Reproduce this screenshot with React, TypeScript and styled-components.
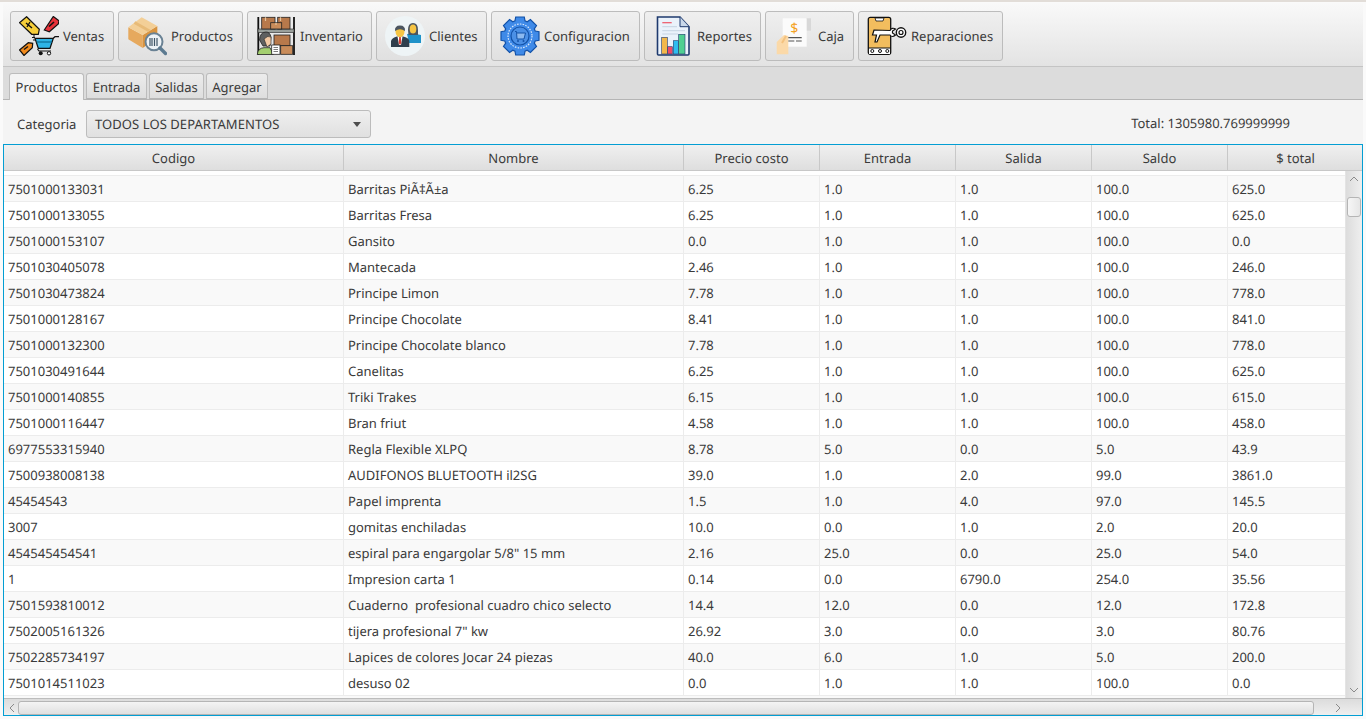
import { createGlobalStyle, styled } from 'styled-components';

const GlobalStyle = createGlobalStyle`
  html, body {
    margin: 0;
    padding: 0;
    height: 719px;
    overflow: hidden;
    background: #f4f4f4;
    font-family: "Noto Sans", "Open Sans", sans-serif;
    font-size: 13px;
    color: #3a3a3a;
    text-rendering: geometricPrecision;
  }
`;

const Page = styled.div`
  width: 1366px;
  height: 719px;
  display: flex;
  flex-direction: column;
  background: #f4f4f4;
  overflow: hidden;
`;

const TitleEdge = styled.div`
  height: 2px;
  background: #e2ddd8;
  flex: none;
`;

const Inner = styled.div`
  flex: 1;
  min-height: 0;
  display: flex;
  flex-direction: column;
  padding: 1px 3px 3px 3px;
  background: #fafafa;
`;

const Toolbar = styled.div`
  flex: none;
  height: 64px;
  box-sizing: border-box;
  display: flex;
  align-items: flex-start;
  gap: 4px;
  padding: 8px 7px 0;
  background: linear-gradient(#f9f9f9, #e3e3e3);
  border-bottom: 1px solid #c4c4c4;
`;

const ToolButton = styled.div<{ $w: number }>`
  width: ${(p) => p.$w}px;
  height: 50px;
  box-sizing: border-box;
  display: flex;
  align-items: center;
  gap: 4px;
  padding-left: 8px;
  border: 1px solid #bcbcbc;
  border-radius: 3px;
  background: linear-gradient(#efefef, #e0e0e0);
  white-space: nowrap;
  svg {
    flex: none;
  }
`;

const TabHeader = styled.div`
  flex: none;
  height: 33px;
  box-sizing: border-box;
  display: flex;
  align-items: flex-end;
  gap: 2px;
  padding-left: 6px;
  background: #dcdcdc;
  border-bottom: 1px solid #b5b5b5;
`;

const Tab = styled.div<{ $active?: boolean; $w: number }>`
  width: ${(p) => p.$w}px;
  height: ${(p) => (p.$active ? 27 : 26)}px;
  margin-bottom: ${(p) => (p.$active ? -1 : 0)}px;
  padding-top: ${(p) => (p.$active ? 0 : 1)}px;
  box-sizing: border-box;
  display: flex;
  align-items: center;
  justify-content: center;
  border: 1px solid #bcbcbc;
  border-bottom: ${(p) => (p.$active ? 'none' : '1px solid #b5b5b5')};
  border-radius: 3px 3px 0 0;
  background: ${(p) => (p.$active ? '#f4f4f4' : 'linear-gradient(#ececec, #dedede)')};
  position: relative;
`;

const Filter = styled.div`
  flex: none;
  height: 44px;
  box-sizing: border-box;
  display: flex;
  align-items: center;
  padding: 4px 73px 0 14px;
  background: #f4f4f4;
`;

const FilterLabel = styled.span`
  width: 69px;
`;

const Combo = styled.div`
  width: 285px;
  height: 28px;
  box-sizing: border-box;
  display: flex;
  align-items: center;
  justify-content: space-between;
  padding: 0 9px 0 8px;
  border: 1px solid #bcbcbc;
  border-radius: 3px;
  background: linear-gradient(#efefef, #e0e0e0);
  letter-spacing: 0.08px;
`;

const Arrow = styled.span`
  width: 0;
  height: 0;
  border-left: 4.5px solid transparent;
  border-right: 4.5px solid transparent;
  border-top: 5px solid #4d4d4d;
`;

const Total = styled.span`
  margin-left: auto;
  margin-top: -2px;
`;

const Table = styled.div`
  flex: 1;
  min-height: 0;
  display: flex;
  flex-direction: column;
  border: 1px solid #039ed3;
  background: #fff;
  overflow: hidden;
`;

const columns = '340px 340px 136px 136px 136px 136px 136px';

const HeaderRow = styled.div`
  flex: none;
  height: 26px;
  box-sizing: border-box;
  display: grid;
  grid-template-columns: ${columns};
  background: linear-gradient(#f0f0f0, #dedede);
  border-bottom: 1px solid #c8c8c8;
`;

const HeaderCell = styled.div`
  display: flex;
  align-items: center;
  justify-content: center;
  border-right: 1px solid #c8c8c8;
`;

const Middle = styled.div`
  flex: 1;
  min-height: 0;
  display: flex;
`;

const Viewport = styled.div`
  flex: 1;
  min-width: 0;
  overflow: hidden;
`;

const Row = styled.div<{ $odd: boolean; $h?: number }>`
  height: ${(p) => p.$h ?? 26}px;
  box-sizing: border-box;
  display: grid;
  grid-template-columns: ${columns};
  background: ${(p) => (p.$odd ? '#f9f9f9' : '#fff')};
  border-bottom: 1px solid #ececec;
`;

const Cell = styled.div`
  display: flex;
  align-items: center;
  padding-left: 4px;
  border-right: 1px solid #ececec;
  white-space: pre;
  overflow: hidden;
`;

const VBar = styled.div`
  flex: none;
  width: 16px;
  display: flex;
  flex-direction: column;
  background: linear-gradient(90deg, #dcdcdc, #efefef);
  border-left: 1px solid #e4e4e4;
`;

const BarButton = styled.div`
  flex: none;
  width: 16px;
  height: 16px;
  display: flex;
  align-items: center;
  justify-content: center;
`;

const VThumb = styled.div`
  flex: none;
  height: 20px;
  width: 14px;
  box-sizing: border-box;
  margin: 10px 0 0 1px;
  border: 1px solid #b5b5b5;
  border-radius: 3px;
  background: linear-gradient(90deg, #f6f6f6, #e6e6e6);
`;

const BarSpring = styled.div`
  flex: 1;
`;

const HBar = styled.div`
  flex: none;
  height: 17px;
  box-sizing: border-box;
  display: flex;
  align-items: center;
  padding-top: 1px;
  background: linear-gradient(#dcdcdc, #efefef);
  border-top: 1px solid #bcbcbc;
`;

const HThumb = styled.div`
  flex: none;
  width: 1296px;
  height: 14px;
  box-sizing: border-box;
  margin-left: -2px;
  border: 1px solid #b5b5b5;
  border-radius: 3px;
  background: linear-gradient(#f4f4f4, #e0e0e0);
`;

const rows: string[][] = [
  ['7501000133031', 'Barritas PiÃ‡Ã±a', '6.25', '1.0', '1.0', '100.0', '625.0'],
  ['7501000133055', 'Barritas Fresa', '6.25', '1.0', '1.0', '100.0', '625.0'],
  ['7501000153107', 'Gansito', '0.0', '1.0', '1.0', '100.0', '0.0'],
  ['7501030405078', 'Mantecada', '2.46', '1.0', '1.0', '100.0', '246.0'],
  ['7501030473824', 'Principe Limon', '7.78', '1.0', '1.0', '100.0', '778.0'],
  ['7501000128167', 'Principe Chocolate', '8.41', '1.0', '1.0', '100.0', '841.0'],
  ['7501000132300', 'Principe Chocolate blanco', '7.78', '1.0', '1.0', '100.0', '778.0'],
  ['7501030491644', 'Canelitas', '6.25', '1.0', '1.0', '100.0', '625.0'],
  ['7501000140855', 'Triki Trakes', '6.15', '1.0', '1.0', '100.0', '615.0'],
  ['7501000116447', 'Bran friut', '4.58', '1.0', '1.0', '100.0', '458.0'],
  ['6977553315940', 'Regla Flexible XLPQ', '8.78', '5.0', '0.0', '5.0', '43.9'],
  ['7500938008138', 'AUDIFONOS BLUETOOTH il2SG', '39.0', '1.0', '2.0', '99.0', '3861.0'],
  ['45454543', 'Papel imprenta', '1.5', '1.0', '4.0', '97.0', '145.5'],
  ['3007', 'gomitas enchiladas', '10.0', '0.0', '1.0', '2.0', '20.0'],
  ['454545454541', 'espiral para engargolar 5/8" 15 mm', '2.16', '25.0', '0.0', '25.0', '54.0'],
  ['1', 'Impresion carta 1', '0.14', '0.0', '6790.0', '254.0', '35.56'],
  ['7501593810012', 'Cuaderno  profesional cuadro chico selecto', '14.4', '12.0', '0.0', '12.0', '172.8'],
  ['7502005161326', 'tijera profesional 7" kw', '26.92', '3.0', '0.0', '3.0', '80.76'],
  ['7502285734197', 'Lapices de colores Jocar 24 piezas', '40.0', '6.0', '1.0', '5.0', '200.0'],
  ['7501014511023', 'desuso 02', '0.0', '1.0', '1.0', '100.0', '0.0'],
];

const headers = ['Codigo', 'Nombre', 'Precio costo', 'Entrada', 'Salida', 'Saldo', '$ total'];

const gearPath = () => {
  const pts: string[] = [];
  for (let i = 0; i < 8; i++) {
    const a = (i * Math.PI) / 4 - Math.PI / 2;
    const at = (r: number, d: number) => {
      const x = 20 + r * Math.cos(a + d);
      const y = 20 + r * Math.sin(a + d);
      return `${x.toFixed(1)} ${y.toFixed(1)}`;
    };
    pts.push(at(16, -0.32), at(19.5, -0.22), at(19.5, 0.22), at(16, 0.32));
  }
  return `M${pts.join(' L')} Z`;
};

const VentasIcon = () => (
  <svg width="40" height="40" viewBox="0 0 40 40">
    <path d="M.5 6.700 L7.600 .7 L20.300 13.300 L19.300 18.300 L12.700 18.300 Z" fill="#f7cf3a" stroke="#111" strokeWidth="1.2" />
    <path d="M7 7 L13 12 M11 6 L8 11" stroke="#111" strokeWidth="1.4" />
    <path d="M25.300 14 L34.300 .5 L40 4.700 L39.300 8 L30.300 15.700 Z" fill="#e8323a" stroke="#111" strokeWidth="1.2" />
    <path d="M30 10.500 L35 6" stroke="#111" strokeWidth="1.6" />
    <path d="M.5 34 L9.300 26.700 L13.700 27.300 L13.300 31.700 L5 39.500 Z" fill="#f08a1c" stroke="#111" strokeWidth="1.2" />
    <path d="M5 33.500 L9 30.500" stroke="#111" strokeWidth="1.4" />
    <path d="M13 21.500 H16 M14 24 H17 M15 18 V21" stroke="#111" strokeWidth="1" />
    <path d="M16 22.300 H34.300 L31 32.300 H19.300 Z" fill="#2eb4e6" stroke="#111" strokeWidth="1.2" />
    <path d="M17.500 26 H33" stroke="#0d6c92" strokeWidth="1.2" />
    <path d="M34.300 22.300 L36 20.700 H40 M18.500 33 L20 35 H32" fill="none" stroke="#111" strokeWidth="1.2" />
    <circle cx="21.700" cy="37.300" r="2" fill="#111" />
    <circle cx="30" cy="37.300" r="1.700" fill="#fff" stroke="#111" />
  </svg>
);

const ProductosIcon = () => (
  <svg width="40" height="40" viewBox="0 0 40 40">
    <path d="M1.300 11.300 L15.700 19 V32 L1.300 23.300 Z" fill="#e6a95e" />
    <path d="M15.700 19 L30.300 10 V22 L15.700 32 Z" fill="#d99440" />
    <path d="M1.300 11.300 L14.700 1.300 L30.300 10 L15.700 19 Z" fill="#f3cf97" />
    <path d="M7.500 6.500 L22.500 15" stroke="#e8bb78" strokeWidth="3" />
    <circle cx="27" cy="25.700" r="8.500" fill="#eef3f7" stroke="#6a8294" strokeWidth="2" />
    <path d="M23 22 V30 M25 22 V30 M27.500 22 V30 M30 22 V30" stroke="#3f5566" strokeWidth="1.2" />
    <path d="M33 32 L38.500 37.500" stroke="#5c7a90" strokeWidth="3.400" strokeLinecap="round" />
  </svg>
);

const InventarioIcon = () => (
  <svg width="40" height="40" viewBox="0 0 40 40">
    <path d="M2.300 1 V39 M38 1 V39" stroke="#111" strokeWidth="1.800" />
    <rect x="2" y="13" width="36" height="3.500" fill="#9aa09c" stroke="#222" strokeWidth=".6" />
    <rect x="5.700" y="1.300" width="13.300" height="11.700" fill="#b8794b" stroke="#222" strokeWidth=".8" />
    <rect x="21.700" y="1.300" width="12.300" height="11.700" fill="#b8794b" stroke="#222" strokeWidth=".8" />
    <rect x="14.700" y="6.700" width="11" height="6.300" fill="#c98c5a" stroke="#222" strokeWidth=".8" />
    <path d="M24.500 1.300 V5 M9.500 1.300 V5 M20 6.700 V9" stroke="#e5c49c" strokeWidth="1.200" />
    <rect x="18" y="19" width="16" height="10.700" fill="#b8794b" stroke="#222" strokeWidth=".8" />
    <rect x="24.700" y="29.700" width="12" height="8.600" fill="#c98c5a" stroke="#222" strokeWidth=".8" />
    <path d="M3.500 24 Q4 16 10 16 Q14 16 15 21 L14 30 H7 Z" fill="#5e6060" stroke="#222" strokeWidth=".8" />
    <path d="M8 23 Q12 19 15 21 L15 28 L11 31 Z" fill="#f2c9a4" stroke="#222" strokeWidth=".6" />
    <path d="M1.300 38.500 Q2 32 8 31.700 H14 L17.300 38.500 Z" fill="#a4cf70" stroke="#222" strokeWidth=".8" />
    <rect x="15.700" y="29" width="8.300" height="9.300" fill="#fff" stroke="#222" strokeWidth=".8" />
    <path d="M17.500 31.500 H22 M17.500 33.500 H22 M17.500 35.500 H22" stroke="#444" strokeWidth=".7" />
  </svg>
);

const ClientesIcon = () => (
  <svg width="40" height="40" viewBox="0 0 40 40">
    <circle cx="20" cy="20" r="20" fill="#eef4f6" />
    <path d="M22 18 Q28 16.500 36 19 V27 H24 Z" fill="#1f92c9" />
    <path d="M6 31 V25 Q7 21.500 12 20.500 H18 Q24 21.500 24.300 25 V31 Z" fill="#2f3e4c" />
    <path d="M12.500 20.500 H17.500 L16 29 H14 Z" fill="#fff" />
    <path d="M14.200 21 H15.800 L16.300 27 L15 29 L13.700 27 Z" fill="#d43a2f" />
    <ellipse cx="15" cy="15.500" rx="4.500" ry="5.500" fill="#f6c544" />
    <path d="M10 15 Q9.500 9.500 15 9.500 Q20.500 9.500 20 15 Q15 11.500 10 15 Z" fill="#4b5560" />
    <path d="M23 14 Q23 7 28 7 Q33 7 33 14 L33 19 H23.500 Z" fill="#4b5560" />
    <ellipse cx="28" cy="13" rx="3.300" ry="4.500" fill="#f6c544" />
  </svg>
);

const ConfigIcon = () => (
  <svg width="40" height="40" viewBox="0 0 40 40">
    <path d={gearPath()} fill="#3f8ae8" stroke="#1352a8" strokeWidth="1.200" />
    <circle cx="20" cy="20" r="12" fill="#3f8ae8" stroke="#d7e7fb" strokeWidth="1.200" strokeDasharray="1.600 1.200" />
    <circle cx="20" cy="20" r="9" fill="#4b90e6" stroke="#1352a8" strokeWidth="1.200" />
    <path d="M15 15.500 H16.500 L17 23 H24 L25.500 17 H17" fill="#8cb9ef" stroke="#1352a8" strokeWidth="1" />
    <circle cx="18" cy="25" r="1" fill="#1352a8" />
    <circle cx="23.500" cy="25" r="1" fill="#1352a8" />
  </svg>
);

const ReportesIcon = () => (
  <svg width="40" height="40" viewBox="0 0 40 40">
    <path d="M4.500 1 H27 L36 10.700 V38 Q36 39 35 39 H5.500 Q4.500 39 4.500 38 Z" fill="#eaf2fb" stroke="#1e3a6e" strokeWidth="1.600" />
    <path d="M27 1 V10.700 H36" fill="#c9d8ea" stroke="#1e3a6e" strokeWidth="1" />
    <path d="M9.300 6.700 H18.700" stroke="#ee5566" strokeWidth="1.200" />
    <path d="M9.300 10.700 H24 M9.300 14.700 H32 M9.300 18 H25" stroke="#c6d3e2" strokeWidth="1" />
    <rect x="8.700" y="21.300" width="5.600" height="16.700" fill="#f2b84b" stroke="#1e3a6e" strokeWidth=".6" />
    <rect x="14.700" y="30.700" width="4.600" height="7.300" fill="#ee4a68" stroke="#1e3a6e" strokeWidth=".6" />
    <rect x="20.300" y="24.700" width="5" height="13.300" fill="#2fbcf0" stroke="#1e3a6e" strokeWidth=".6" />
    <rect x="25.700" y="18.300" width="6.300" height="19.700" fill="#4fcf92" stroke="#1e3a6e" strokeWidth=".6" />
  </svg>
);

const CajaIcon = () => (
  <svg width="40" height="40" viewBox="0 0 40 40">
    <rect x="32" y="2.300" width="5" height="12.400" fill="#d8d8d8" />
    <rect x="8.700" y="2.300" width="24" height="28.400" fill="#fbfbfb" />
    <path d="M2.700 26 L10 19 L14.300 20 V38.300 H2.700 Z" fill="#fbd9a8" />
    <path d="M12 20 L8 27" stroke="#f4c27f" strokeWidth="2" />
    <text x="20.300" y="17" fontSize="14" fill="#f4a21f" textAnchor="middle" fontFamily="Noto Sans">$</text>
    <path d="M14.300 21.700 H27.700 M14.300 25 H20.300 M22 25 H27.700" stroke="#555" strokeWidth="1.200" />
  </svg>
);

const ReparacionesIcon = () => (
  <svg width="40" height="40" viewBox="0 0 40 40">
    <rect x="1.300" y="1.300" width="22.400" height="37" rx="2" fill="#f2bd5e" stroke="#111" strokeWidth="1.300" />
    <path d="M8 2 L9 5 H16 L17 2 Z" fill="#fff" stroke="#111" strokeWidth=".8" />
    <rect x="2" y="32" width="21" height="6" fill="#fff" />
    <path d="M1.300 32 H23.700" stroke="#111" />
    <circle cx="5.300" cy="35" r="1.500" fill="#fff" stroke="#111" />
    <circle cx="13" cy="35" r="1.500" fill="#fff" stroke="#111" />
    <circle cx="20.300" cy="35" r="1.500" fill="#fff" stroke="#111" />
    <path d="M7 14 L23 14.500 Q25 11 28.500 13 L25.500 15 V17 L28.500 19 Q25 22 23 19 H13 L10 26 H8 L9.500 19 H5.500 Z" fill="#fff" stroke="#111" strokeWidth="1.200" />
    <circle cx="34" cy="16.500" r="4.700" fill="#fff" stroke="#111" strokeWidth="1.400" />
    <circle cx="34" cy="16.500" r="2" fill="none" stroke="#111" strokeWidth="1.200" />
  </svg>
);

const ChevronUp = () => (
  <svg width="10" height="6" viewBox="0 0 10 6">
    <path d="M1 5 L5 1 L9 5" fill="none" stroke="#8a8a8a" strokeWidth="1" />
  </svg>
);

const ChevronDown = () => (
  <svg width="10" height="6" viewBox="0 0 10 6">
    <path d="M1 1 L5 5 L9 1" fill="none" stroke="#8a8a8a" strokeWidth="1" />
  </svg>
);

const ChevronLeft = () => (
  <svg width="6" height="10" viewBox="0 0 6 10">
    <path d="M5 1 L1 5 L5 9" fill="none" stroke="#8a8a8a" strokeWidth="1" />
  </svg>
);

const ChevronRight = () => (
  <svg width="6" height="10" viewBox="0 0 6 10">
    <path d="M1 1 L5 5 L1 9" fill="none" stroke="#8a8a8a" strokeWidth="1" />
  </svg>
);

export default function App() {
  return (
    <Page>
      <GlobalStyle />
      <TitleEdge />
      <Inner>
        <Toolbar>
          <ToolButton $w={104}><VentasIcon />Ventas</ToolButton>
          <ToolButton $w={125}><ProductosIcon />Productos</ToolButton>
          <ToolButton $w={125}><InventarioIcon />Inventario</ToolButton>
          <ToolButton $w={111}><ClientesIcon />Clientes</ToolButton>
          <ToolButton $w={149}><ConfigIcon />Configuracion</ToolButton>
          <ToolButton $w={117}><ReportesIcon />Reportes</ToolButton>
          <ToolButton $w={89}><CajaIcon />Caja</ToolButton>
          <ToolButton $w={145}><ReparacionesIcon />Reparaciones</ToolButton>
        </Toolbar>
        <TabHeader>
          <Tab $active $w={75}>Productos</Tab>
          <Tab $w={61}>Entrada</Tab>
          <Tab $w={55}>Salidas</Tab>
          <Tab $w={62}>Agregar</Tab>
        </TabHeader>
        <Filter>
          <FilterLabel>Categoria</FilterLabel>
          <Combo>
            TODOS LOS DEPARTAMENTOS
            <Arrow />
          </Combo>
          <Total>Total: 1305980.769999999</Total>
        </Filter>
        <Table>
          <HeaderRow>
            {headers.map((h) => (
              <HeaderCell key={h}>{h}</HeaderCell>
            ))}
          </HeaderRow>
          <Middle>
            <Viewport>
              <Row $odd={false} $h={5} />
              {rows.map((r, i) => (
                <Row key={r[0]} $odd={i % 2 === 0}>
                  {r.map((c, j) => (
                    <Cell key={j}>{c}</Cell>
                  ))}
                </Row>
              ))}
              <Row $odd />
            </Viewport>
            <VBar>
              <BarButton><ChevronUp /></BarButton>
              <VThumb />
              <BarSpring />
              <BarButton><ChevronDown /></BarButton>
            </VBar>
          </Middle>
          <HBar>
            <BarButton><ChevronLeft /></BarButton>
            <HThumb />
            <BarSpring />
            <BarButton><ChevronRight /></BarButton>
            <BarButton />
          </HBar>
        </Table>
      </Inner>
    </Page>
  );
}
